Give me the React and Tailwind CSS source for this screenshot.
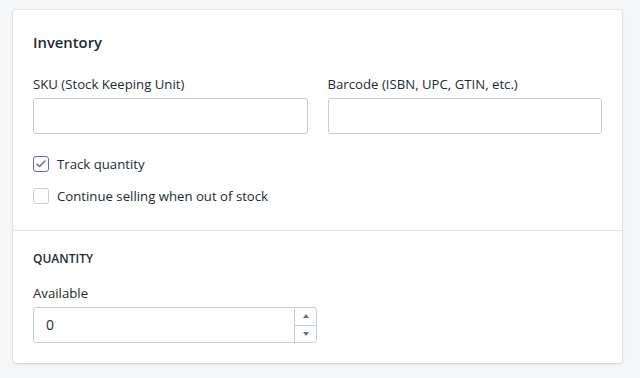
import { Check } from 'lucide-react';

const Checkbox = ({ checked, label }) => (
  <label className="flex h-5 items-center gap-2">
    <span
      className={`flex h-4 w-4 items-center justify-center rounded-[3px] border bg-white ${
        checked ? 'border-[#5c6ac4]' : 'border-[#c4cdd5]'
      }`}
    >
      {checked && <Check className="h-3 w-3 text-[#5c6ac4]" strokeWidth={3} />}
    </span>
    <span className="text-[13.2px] leading-5 text-[#212b36]">{label}</span>
  </label>
);

const Field = ({ label }) => (
  <div className="flex flex-col">
    <span className="mb-1 text-[13.2px] leading-5 text-[#212b36]">{label}</span>
    <div className="h-9 rounded-[3px] border border-[#c4cdd5] bg-white" />
  </div>
);

export default function App() {
  return (
    <div
      className="min-h-[378px] bg-[#f4f6f8] px-[13px] pt-[10px]"
      style={{ fontFamily: '"Open Sans", "Noto Sans", sans-serif' }}
    >
      <div className="w-[609px] rounded-[3px] bg-white shadow-[0_0_0_1px_rgba(63,63,68,0.05),0_1px_3px_0_rgba(63,63,68,0.15)]">
        {/* Inventory */}
        <div className="px-5 pb-6 pt-5">
          <h2 className="text-[14.8px] font-semibold leading-6 text-[#212b36]">Inventory</h2>
          <div className="mt-5 grid grid-cols-2 gap-5">
            <Field label="SKU (Stock Keeping Unit)" />
            <Field label="Barcode (ISBN, UPC, GTIN, etc.)" />
          </div>
          <div className="mt-5 flex flex-col gap-3">
            <Checkbox checked label="Track quantity" />
            <Checkbox label="Continue selling when out of stock" />
          </div>
        </div>

        {/* Quantity */}
        <div className="border-t border-[#dfe3e8] px-5 pb-5 pt-5">
          <h3 className="text-[12px] font-semibold uppercase leading-4 text-[#212b36]">Quantity</h3>
          <div className="mt-4 flex flex-col">
            <span className="mb-1 text-[13.2px] leading-5 text-[#212b36]">Available</span>
            <div className="flex h-9 w-[284px] rounded-[3px] border border-[#c4cdd5] bg-white">
              <span className="flex-1 px-3 text-[14px] leading-[34px] text-[#212b36]">0</span>
              <div className="flex w-[22px] flex-col border-l border-[#c4cdd5]">
                <div className="flex flex-1 items-center justify-center border-b border-[#c4cdd5]">
                  <svg width="6" height="4" viewBox="0 0 6 4">
                    <path d="M0 4 L3 0 L6 4 Z" fill="#637381" />
                  </svg>
                </div>
                <div className="flex flex-1 items-center justify-center">
                  <svg width="6" height="4" viewBox="0 0 6 4">
                    <path d="M0 0 L3 4 L6 0 Z" fill="#637381" />
                  </svg>
                </div>
              </div>
            </div>
          </div>
        </div>
      </div>
    </div>
  );
}
